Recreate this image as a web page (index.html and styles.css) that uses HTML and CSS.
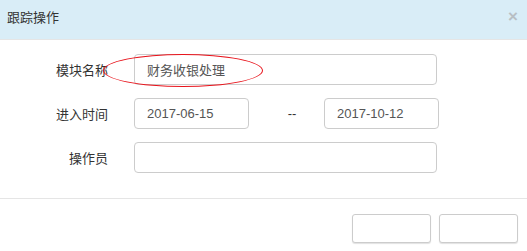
FILE: index.html
```html
<!DOCTYPE html>
<html>
<head>
<meta charset="utf-8">
<link rel="stylesheet" href="styles.css">
</head>
<body>
<div class="modal">
  <div class="modal-header">
    <span class="title">跟踪操作</span>
    <span class="close">×</span>
  </div>
  <div class="modal-body">
    <div class="row">
      <label class="lbl">模块名称</label>
      <div class="field wide">财务收银处理</div>
      <div class="ellipse"></div>
    </div>
    <div class="row">
      <label class="lbl">进入时间</label>
      <div class="field date">2017-06-15</div>
      <span class="dash">--</span>
      <div class="field date">2017-10-12</div>
    </div>
    <div class="row">
      <label class="lbl">操作员</label>
      <div class="field wide"></div>
    </div>
  </div>
  <div class="modal-footer">
    <button class="btn"></button>
    <button class="btn"></button>
  </div>
</div>
</body>
</html>
```
FILE: styles.css
```css
* { box-sizing: border-box; }
body {
  margin: 0;
  background: #fff;
  font-family: "Liberation Sans", "Noto Sans CJK SC", sans-serif;
  font-size: 13px;
  color: #333;
}
.modal { width: 527px; height: 251px; }
.modal-header {
  height: 40px;
  background: #d9edf7;
  border-bottom: 1px solid #e5e5e5;
  display: flex;
  align-items: center;
  justify-content: space-between;
  padding: 0 9px 7px 7px;
}
.title { font-size: 13px; color: #333; }
.close {
  font-size: 17px;
  font-weight: bold;
  color: #b8bfc4;
  line-height: 1;
}
.modal-body {
  padding: 14px 0 0 0;
  height: 159px;
  border-bottom: 1px solid #e5e5e5;
}
.row {
  position: relative;
  display: flex;
  align-items: center;
  height: 31px;
  margin-bottom: 13px;
}
.lbl {
  width: 108px;
  text-align: right;
  padding-right: 0;
  margin-right: 26px;
  color: #333;
}
.field {
  height: 31px;
  border: 1px solid #ccc;
  border-radius: 4px;
  padding: 0 12px;
  display: flex;
  align-items: center;
  color: #555;
  font-size: 13px;
}
.wide { width: 303px; }
.date { width: 115px; }
.dash {
  width: 75px;
  text-align: center;
  color: #333;
  padding-left: 11px;
}
.ellipse {
  position: absolute;
  left: 103px;
  top: 0px;
  width: 160px;
  height: 33px;
  border: 1.3px solid #e8131b;
  border-radius: 50%;
}
.modal-footer {
  display: flex;
  justify-content: flex-end;
  gap: 8px;
  padding: 15px 9px 0 0;
}
.btn {
  width: 79px;
  height: 29px;
  background: #fff;
  border: 1px solid #ccc;
  border-radius: 3px;
  box-shadow: 0 1px 1px rgba(0,0,0,0.12);
  padding: 0;
}
```
